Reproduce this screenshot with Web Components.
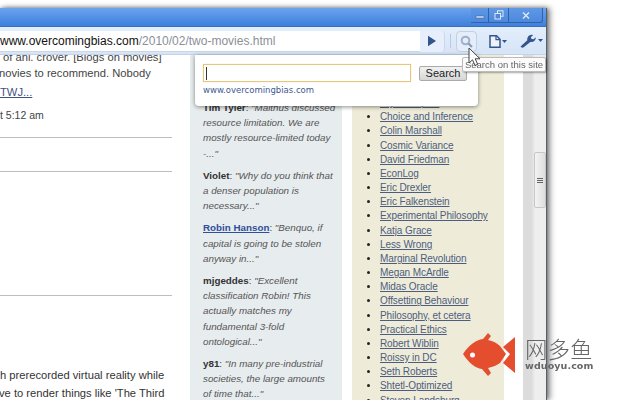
<!DOCTYPE html>
<html>
<head>
<meta charset="utf-8">
<title>Search on this site</title>
<style>
html, body { margin: 0; height: 100%; overflow: hidden; background: #fff; }
body { font-family: "Liberation Sans", Arial, sans-serif; }
</style>
</head>
<body>
<browser-window>
  <title-bar slot="title"></title-bar>
  <nav-bar slot="nav"></nav-bar>
  <page-area slot="page">
    <main-column slot="main"></main-column>
    <comment-column slot="comments">
      <comment-item who="Tim Tyler" quote="&quot;Malthus discussed|resource limitation. We are|mostly resource-limited today|-...&quot;"></comment-item>
      <comment-item who="Violet" quote="&quot;Why do you think that|a denser population is|necessary...&quot;"></comment-item>
      <comment-item who="Robin Hanson" link quote="&quot;Benquo, if|capital is going to be stolen|anyway in...&quot;"></comment-item>
      <comment-item who="mjgeddes" quote="&quot;Excellent|classification Robin! This|actually matches my|fundamental 3-fold|ontological...&quot;"></comment-item>
      <comment-item who="y81" quote="&quot;In many pre-industrial|societies, the large amounts|of time that...&quot;"></comment-item>
    </comment-column>
    <blog-list slot="links"></blog-list>
    <scroll-bar slot="scroll"></scroll-bar>
  </page-area>
  <search-popup slot="over"></search-popup>
  <site-tooltip slot="over"></site-tooltip>
</browser-window>
<water-mark></water-mark>

<script>
'use strict';

class BrowserWindow extends HTMLElement {
    constructor() {
        super();
        this.attachShadow({mode: 'open'}).innerHTML = `
            <style>
                :host{
                    display: block;
                    position: relative;
                    width: 547px;
                    height: 392px;
                    margin-top: 8px;
                    box-shadow: 0 0 4px rgba(0,0,0,.35), 3px 0 6px rgba(0,0,0,.45);
                    filter: blur(.35px);
                }
                .frame{
                    display: flex;
                    flex-direction: column;
                    height: 100%;
                    border-right: 1px solid #56606c;
                    box-sizing: border-box;
                }
            </style>
            <div class="frame">
                <slot name="title"></slot>
                <slot name="nav"></slot>
                <slot name="page"></slot>
            </div>
            <slot name="over"></slot>
        `;
    }
}

class TitleBar extends HTMLElement {
    constructor() {
        super();
        this.attachShadow({mode: 'open'}).innerHTML = `
            <style>
                :host{
                    display: flex;
                    justify-content: flex-end;
                    flex: none;
                    height: 19px;
                    padding-right: 3px;
                    background: linear-gradient(#6aa3ee, #3f80dd);
                    border-bottom: 1px solid #3b6fb8;
                    box-sizing: border-box;
                }
                .btn{
                    display: flex;
                    align-items: center;
                    justify-content: center;
                    height: 14px;
                    border: 1px solid #2f62ab;
                    border-top: 0;
                    border-left-width: 0;
                    background: linear-gradient(#5f98e6, #4d88dc);
                    box-sizing: content-box;
                }
                .btn:first-child{ border-left-width: 1px; border-radius: 0 0 0 3px; }
                .btn:last-child{ border-radius: 0 0 3px 0; }
            </style>
            <div class="btn" style="width:17px">
                <svg width="10" height="8" viewBox="0 0 10 8"><rect x="1" y="5" width="8" height="2" fill="#dfe8f5" stroke="#35588f" stroke-width=".5"/></svg>
            </div>
            <div class="btn" style="width:19px">
                <svg width="10" height="10" viewBox="0 0 10 10" fill="none" stroke="#dfe8f5" stroke-width="1"><rect x="3.500" y=".8" width="5.500" height="5.500"/><rect x="1" y="3.500" width="5.500" height="5.500" fill="#4d88dc"/></svg>
            </div>
            <div class="btn" style="width:33px">
                <svg width="8" height="7" viewBox="0 0 8 7" stroke="#dfe8f5" stroke-width="1.400"><path d="M1 .5 7 6.500M7 .5 1 6.500"/></svg>
            </div>
        `;
    }
}

class NavBar extends HTMLElement {
    constructor() {
        super();
        this.attachShadow({mode: 'open'}).innerHTML = `
            <style>
                :host{
                    display: flex;
                    align-items: center;
                    flex: none;
                    height: 28px;
                    background: linear-gradient(#e3eefb, #d6e4f7);
                    border-bottom: 1px solid #c4d2e6;
                    box-sizing: border-box;
                    padding-top: 1px;
                }
                .omni{
                    display: flex;
                    align-items: center;
                    width: 420px;
                    height: 21px;
                    background: #fff;
                    border-bottom: 1px solid #c9d6e8;
                    box-sizing: border-box;
                    font: 12px "Liberation Sans", Arial, sans-serif;
                    color: #111;
                    white-space: nowrap;
                    overflow: hidden;
                }
                .omni span{ color: #8a8f96; }
                .go{
                    display: flex;
                    align-items: center;
                    justify-content: center;
                    width: 25px;
                    height: 21px;
                    background: #e6effb;
                    border-radius: 0 4px 4px 0;
                    border-right: 1px solid #cad8ea;
                    box-sizing: border-box;
                }
                .sep{ width: 1px; height: 14px; background: #bcc9db; margin: 0 5px; }
                .search{
                    display: flex;
                    align-items: center;
                    justify-content: center;
                    width: 21px;
                    height: 21px;
                    background: #e4edf9;
                    border: 1px solid #c3d0e2;
                    border-radius: 4px;
                    box-sizing: border-box;
                }
                .page{ display: flex; align-items: center; margin-left: 12px; }
                .wrench{ display: flex; align-items: center; margin-left: 13px; }
            </style>
            <div class="omni"><div>www.overcomingbias.com<span>/2010/02/two-movies.html</span></div></div>
            <div class="go">
                <svg width="10" height="12" viewBox="0 0 10 12"><path d="M1 .7 9 6 1 11.300Z" fill="#33558f"/></svg>
            </div>
            <div class="sep"></div>
            <div class="search">
                <svg width="15" height="15" viewBox="0 0 15 15" fill="none"><circle cx="6.500" cy="6.500" r="3.800" stroke="#9db1cb" stroke-width="2"/><path d="M9.500 9.500 13 13" stroke="#8b9cb3" stroke-width="2.200"/></svg>
            </div>
            <div class="page">
                <svg width="18" height="13" viewBox="0 0 18 13" fill="none"><path d="M1 .8H7.500L11 4.200V12.200H1Z" fill="#eef3fb" stroke="#33558f" stroke-width="1.500"/><path d="M7 1V4.700H11" stroke="#33558f" stroke-width="1.200"/><path d="M13 5H18L15.500 8Z" fill="#33558f"/></svg>
            </div>
            <div class="wrench">
                <svg width="23" height="14" viewBox="0 0 23 14"><path d="M.8 12.200 7.300 6.200C6.800 3.800 8.400 1 11.500 .8L13.200 1 10.800 3.200 11.600 5 13.600 5.200 15.700 3.300C16 6.300 13.500 8.600 10.300 7.900L3.400 13.600C2 14.100 .3 13.300.8 12.200Z" fill="#33558f"/><path d="M18 5H23L20.500 8Z" fill="#33558f"/></svg>
            </div>
        `;
    }
}

class PageArea extends HTMLElement {
    constructor() {
        super();
        this.attachShadow({mode: 'open'}).innerHTML = `
            <style>
                :host{
                    display: grid;
                    grid-template-columns: 190px 152px 10px 152px 19px 24px;
                    flex: 1;
                    min-height: 0;
                    overflow: hidden;
                    background: #fff;
                }
                .gap{ background: #fff; }
            </style>
            <slot name="main"></slot>
            <slot name="comments"></slot>
            <div class="gap"></div>
            <slot name="links"></slot>
            <div class="gap"></div>
            <slot name="scroll"></slot>
        `;
    }
}

class MainColumn extends HTMLElement {
    constructor() {
        super();
        this.attachShadow({mode: 'open'}).innerHTML = `
            <style>
                :host{
                    display: block;
                    overflow: hidden;
                    font: 11.2px/19px "Liberation Sans", Arial, sans-serif;
                    color: #444;
                    white-space: nowrap;
                }
                p{ margin: 0; }
                a{ color: #3f5383; text-decoration: underline; }
                .body{ margin-top: -7px; }
                .when{ margin-top: 4px; font-size: 10.500px; }
                hr{
                    width: 172px;
                    height: 1px;
                    margin: 0;
                    border: 0;
                    background: #bdbdbd;
                }
                .end{ margin-top: 70px; line-height: 18px; color: #333; }
            </style>
            <div class="body">
                <p style="margin-left:3px">of anl. crover. [Blogs on movies]</p>
                <p style="margin-left:-1px;margin-top:-3px">novies to recommend. Nobody</p>
                <p><a>TWJ...</a></p>
                <p class="when">t 5:12 am</p>
            </div>
            <hr style="margin-top:12px">
            <hr style="margin-top:33px">
            <hr style="margin-top:123px">
            <div class="end">
                <p style="margin-left:0">h prerecorded virtual reality while</p>
                <p style="margin-left:-1px">ve to render things like 'The Third</p>
            </div>
        `;
    }
}

class CommentColumn extends HTMLElement {
    constructor() {
        super();
        this.attachShadow({mode: 'open'}).innerHTML = `
            <style>
                :host{
                    display: block;
                    overflow: hidden;
                    background: #e7ecee;
                    padding: 45px 6px 0 13px;
                }
            </style>
            <slot></slot>
        `;
    }
}

class CommentItem extends HTMLElement {
    constructor() {
        super();
        const who = this.getAttribute('who');
        const name = this.hasAttribute('link') ? `<a>${who}</a>` : `<b>${who}</b>`;
        const quote = this.getAttribute('quote').split('|').join('<br>');
        this.attachShadow({mode: 'open'}).innerHTML = `
            <style>
                :host{
                    display: block;
                    margin-bottom: 7px;
                    font: 9.800px/15.200px "Liberation Sans", Arial, sans-serif;
                    color: #444;
                    white-space: nowrap;
                }
                b{ color: #333; }
                a{ color: #2f4f9a; font-weight: bold; text-decoration: underline; }
                i{ color: #555; }
            </style>
            ${name}: <i>${quote}</i>
        `;
    }
}

class BlogList extends HTMLElement {
    constructor() {
        super();
        const names = ['Bryan Caplan', 'Choice and Inference', 'Colin Marshall', 'Cosmic Variance', 'David Friedman',
            'EconLog', 'Eric Drexler', 'Eric Falkenstein', 'Experimental Philosophy', 'Katja Grace', 'Less Wrong',
            'Marginal Revolution', 'Megan McArdle', 'Midas Oracle', 'Offsetting Behaviour', 'Philosophy, et cetera',
            'Practical Ethics', 'Robert Wiblin', 'Roissy in DC', 'Seth Roberts', 'Shtetl-Optimized', 'Steven Landsburg'];
        this.attachShadow({mode: 'open'}).innerHTML = `
            <style>
                :host{
                    display: block;
                    overflow: hidden;
                    background: #eeecd9;
                }
                ul{
                    margin: 41px 0 0;
                    padding: 0 0 0 28px;
                    font: 10px/14.170px "Liberation Sans", Arial, sans-serif;
                    letter-spacing: -.1px;
                    color: #222;
                    white-space: nowrap;
                }
                a{ color: #4d5d80; text-decoration: underline; }
            </style>
            <ul>${names.map(n => `<li><a>${n}</a></li>`).join('')}</ul>
        `;
    }
}

class ScrollBar extends HTMLElement {
    constructor() {
        super();
        this.attachShadow({mode: 'open'}).innerHTML = `
            <style>
                :host{
                    display: block;
                    background: linear-gradient(90deg, #dcdcdc, #dcdcdc 36%, #efefef 50%, #ececec);
                    padding: 97px 0 0 11px;
                    box-sizing: border-box;
                }
                .thumb{
                    display: flex;
                    align-items: center;
                    justify-content: center;
                    width: 12px;
                    height: 56px;
                    background: linear-gradient(90deg, #f3f3f3, #dedede);
                    border: 1px solid #c8c8c8;
                    border-radius: 2px;
                    box-sizing: border-box;
                }
                .grip{
                    width: 6px;
                    height: 5px;
                    background: repeating-linear-gradient(#666 0 1px, transparent 1px 2px);
                }
            </style>
            <div class="thumb"><div class="grip"></div></div>
        `;
    }
}

class SearchPopup extends HTMLElement {
    constructor() {
        super();
        this.attachShadow({mode: 'open'}).innerHTML = `
            <style>
                :host{
                    display: block;
                    position: absolute;
                    left: 195px;
                    top: 47px;
                    width: 283px;
                    height: 51px;
                    padding: 9px 8px 0;
                    box-sizing: border-box;
                    background: #fff;
                    border-radius: 0 0 4px 4px;
                    box-shadow: 0 1px 4px rgba(0,0,0,.45);
                }
                .row{ display: flex; align-items: center; }
                .field{
                    display: flex;
                    align-items: center;
                    width: 208px;
                    height: 18px;
                    padding-left: 2px;
                    box-sizing: border-box;
                    border: 1px solid #e6c678;
                    box-shadow: 0 0 1px #eed9a6;
                }
                .caret{ width: 1px; height: 13px; background: #333; }
                .btn{
                    display: flex;
                    align-items: center;
                    justify-content: center;
                    width: 48px;
                    height: 15px;
                    margin-left: 8px;
                    font: 11px "Liberation Sans", Arial, sans-serif;
                    color: #222;
                    background: linear-gradient(#f2f2f2, #d6d6d6);
                    border: 1px solid #aaa;
                    border-radius: 2px;
                    box-sizing: border-box;
                }
                .site{
                    margin-top: 2px;
                    font: 8.500px/12px "DejaVu Sans", Verdana, sans-serif;
                    color: #3d5a8f;
                }
            </style>
            <div class="row"><div class="field"><div class="caret"></div></div><div class="btn">Search</div></div>
            <div class="site">www.overcomingbias.com</div>
        `;
    }
}

class SiteTooltip extends HTMLElement {
    constructor() {
        super();
        this.attachShadow({mode: 'open'}).innerHTML = `
            <style>
                :host{
                    display: block;
                    position: absolute;
                    left: 462px;
                    top: 49px;
                    width: 84px;
                    height: 15px;
                    background: #fbfbfb;
                    border: 1px solid #bbb;
                    border-radius: 2px;
                    box-sizing: border-box;
                    box-shadow: 1px 1px 2px rgba(0,0,0,.35);
                    font: 9.500px/13px "Liberation Sans", Arial, sans-serif;
                    color: #666;
                    text-align: center;
                    white-space: nowrap;
                }
                svg{ position: absolute; left: 5px; top: -11px; }
            </style>
            Search on this site
            <svg width="14" height="20" viewBox="0 0 14 20"><path d="M1 1V16L4.500 12.800 7 18.500 9.700 17.300 7.200 11.800H12Z" fill="#fff" fill-opacity=".85" stroke="#444" stroke-width="1"/></svg>
        `;
    }
}

class WaterMark extends HTMLElement {
    constructor() {
        super();
        this.attachShadow({mode: 'open'}).innerHTML = `
            <style>
                :host{
                    display: flex;
                    align-items: center;
                    position: absolute;
                    left: 463px;
                    top: 332px;
                }
                .words{ margin: -3px 0 0 9px; color: #666; }
                .cn{ font: 300 22.500px/24px "Noto Sans CJK SC", sans-serif; }
                .en{ font: bold 9.500px/11px "DejaVu Sans", sans-serif; letter-spacing: .1px; }
            </style>
            <svg width="53" height="46" viewBox="0 0 53 46">
                <path d="M0 22C6 13 13 8 20 7L25 1 28 4 25 8C30 9 34 11 37 14L43 22 37 31C34 33 30 35 25 36L28 41 25 44 19 37C12 36 6 31 0 22Z" fill="#e44d2e"/>
                <circle cx="9.500" cy="23" r="2.500" fill="#fff"/>
                <path d="M52 5V41L40 31 47 22 40 15Z" fill="#e44d2e"/>
            </svg>
            <div class="words"><div class="cn">网多鱼</div><div class="en">wduoyu.com</div></div>
        `;
    }
}

customElements.define('browser-window', BrowserWindow);
customElements.define('title-bar', TitleBar);
customElements.define('nav-bar', NavBar);
customElements.define('page-area', PageArea);
customElements.define('main-column', MainColumn);
customElements.define('comment-column', CommentColumn);
customElements.define('comment-item', CommentItem);
customElements.define('blog-list', BlogList);
customElements.define('scroll-bar', ScrollBar);
customElements.define('search-popup', SearchPopup);
customElements.define('site-tooltip', SiteTooltip);
customElements.define('water-mark', WaterMark);
</script>
</body>
</html>
